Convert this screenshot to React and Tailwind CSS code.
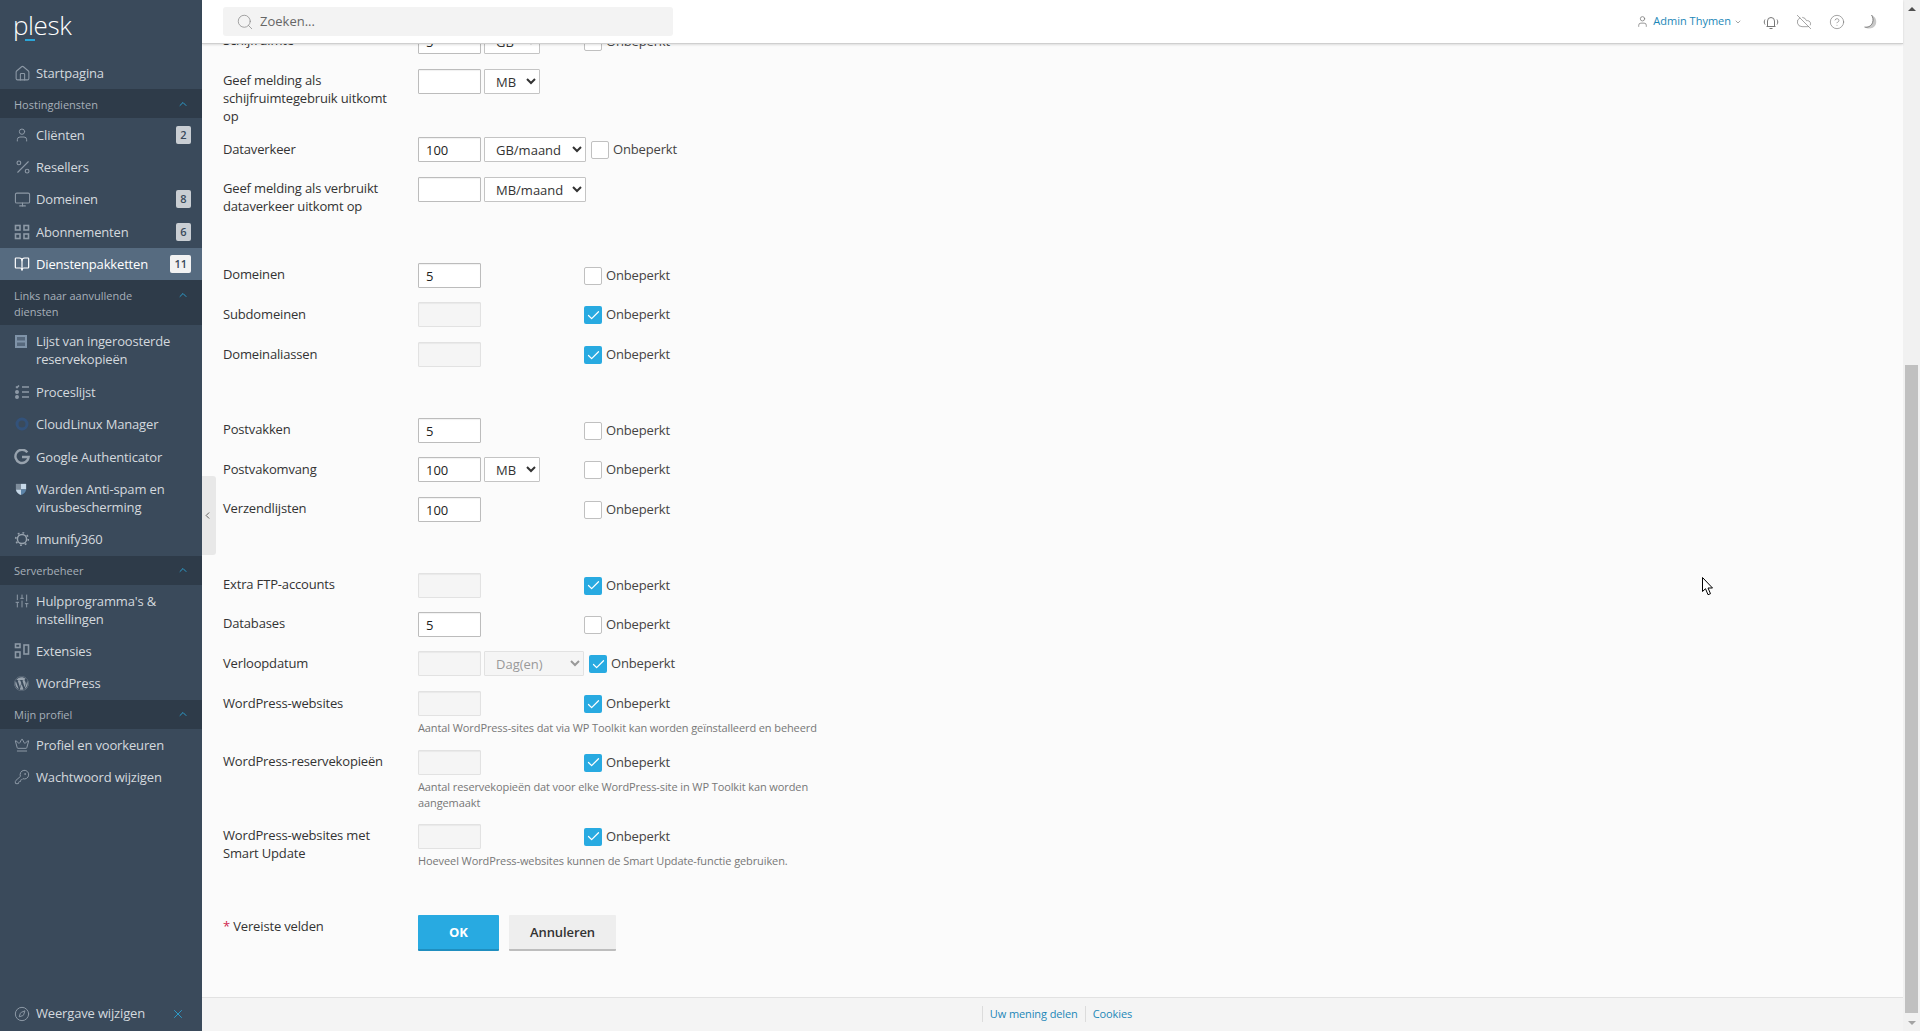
import React from 'react';
import { Home, User, Percent, Monitor, BookOpen, ChevronUp, ChevronDown, ChevronLeft, Crown, KeyRound, Compass, X, Search, CloudOff, CircleHelp, SlidersVertical, Check } from 'lucide-react';
import { FaWordpress } from 'react-icons/fa';

const GridIcon = () => (
  <svg width="16" height="16" viewBox="0 0 16 16" fill="none" stroke="#8d99a6" strokeWidth="1.6">
    <rect x="1.5" y="1.5" width="4.5" height="4.5" /><rect x="10" y="1.5" width="4.5" height="4.5" />
    <rect x="1.5" y="10" width="4.5" height="4.5" /><rect x="10" y="10" width="4.5" height="4.5" />
  </svg>
);

const ExtIcon = () => (
  <svg width="16" height="16" viewBox="0 0 16 16" fill="none" stroke="#8d99a6" strokeWidth="1.6">
    <rect x="1.5" y="1" width="4.5" height="3.5" /><rect x="1.5" y="9" width="4.5" height="5.5" /><rect x="10" y="2" width="4.5" height="9" />
  </svg>
);

const ListIcon = () => (
  <svg width="16" height="16" viewBox="0 0 16 16" fill="none" stroke="#8d99a6" strokeWidth="1.6">
    <path d="M2 2.500l1 1 2-2M8 3h7M8 8h7M8 13h7" />
    <circle cx="3" cy="8" r="1.2" fill="#8d99a6" /><circle cx="3" cy="13" r="1.2" fill="#8d99a6" />
  </svg>
);

const BackupIcon = () => (
  <svg width="12" height="13" viewBox="0 0 12 13" className="ml-[1px]">
    <rect x="0" y="0" width="12" height="13" fill="#7f93a8" />
    <rect x="2" y="2" width="8" height="3.500" fill="#56687c" />
    <rect x="2" y="7.500" width="8" height="3.500" fill="#56687c" />
  </svg>
);

const CloudLinuxIcon = () => (
  <svg width="16" height="16" viewBox="0 0 16 16" fill="none">
    <circle cx="8" cy="8" r="5" stroke="#33527a" strokeWidth="3" />
  </svg>
);

const GoogleIcon = () => (
  <svg width="16" height="16" viewBox="0 0 16 16" fill="none" stroke="#98a3ae" strokeWidth="2.4">
    <path d="M13.300 3.400A6.600 6.600 0 1 0 14.600 8H8" />
  </svg>
);

const ShieldIcon = () => (
  <svg width="12" height="14" viewBox="0 0 14 15" className="ml-[1px]">
    <path d="M1 1.500h6V8H1z" fill="#7e8d9c" /><path d="M7 1.500h6V8H7z" fill="#c6d8e8" />
    <path d="M1 8h6v6.500C4 13.500 1.500 11.500 1 8z" fill="#c6d8e8" /><path d="M7 8h6c-.5 3.500-3 5.500-6 6.500z" fill="#5d84a8" />
  </svg>
);

const GearIcon = () => (
  <svg width="16" height="16" viewBox="0 0 16 16" fill="none" stroke="#98a3ae">
    <circle cx="8" cy="8" r="4.600" strokeWidth="1.500" />
    <circle cx="8" cy="8" r="6.300" strokeWidth="1.600" strokeDasharray="1.800 3.100" />
  </svg>
);

const SirenIcon = () => (
  <svg width="16" height="16" viewBox="0 0 16 16" fill="none" stroke="#777" strokeWidth="1">
    <path d="M4.500 12V7a3.500 3.500 0 0 1 7 0v5M3.500 12.500h9M6.500 14.500h3" />
    <path d="M2 5.500C1 7 1 9 2 10.500M14 5.500c1 1.500 1 3.500 0 5" />
  </svg>
);

const MoonIcon = () => (
  <svg width="16" height="16" viewBox="0 0 16 16">
    <path d="M9.500 1C13.500 2.500 15.500 7 13.500 11 11.500 14.800 6 15.800 2.500 13 6.500 13.500 10 11.500 10.800 7.500 11.200 5 10.700 2.800 9.500 1z" fill="#c8c8c8" />
    <path d="M9.500 1c1.500 2 2 5 1.100 7.500C9.300 12 6 13.800 2.500 13" fill="none" stroke="#666" strokeWidth=".8" />
  </svg>
);

const ico = (Icon, size = 16) => <Icon size={size} color="#8d99a6" strokeWidth={1.5} />;

const NavItem = ({ icon, label, badge, active }) => (
  <div className={`flex items-start pl-[14px] pr-[11px] py-[7.2px] text-[13px] leading-[18px] tracking-[-0.16px] ${active ? 'bg-[#566b80] text-white' : 'text-[#d4d9de]'}`}>
    <span className="w-[22px] h-[18px] shrink-0 flex items-center">{icon}</span>
    <span className="flex-1 min-w-0">{label}</span>
    {badge && (
      <span className={`h-[18px] px-[4px] min-w-[15px] rounded-[2px] text-[11px] font-semibold leading-[18px] tracking-normal text-center text-[#3a4a5b] ${active ? 'bg-[#f2f2f2]' : 'bg-[#c9ced3]'}`}>{badge}</span>
    )}
  </div>
);

const NavSection = ({ label }) => (
  <div className="flex items-start bg-[#2e3b49] pl-[14px] pr-[13px] pt-[7.5px] pb-[5.5px] text-[11px] leading-[16px] text-[#a7b0b9]">
    <span className="flex-1">{label}</span>
    <ChevronUp size={12} color="#2ba6d8" strokeWidth={1.8} className="mt-[1px]" />
  </div>
);

const Sidebar = () => (
  <aside className="w-[202px] h-full shrink-0 flex flex-col bg-[#3a4a5b]">
    <div className="relative h-[57px] shrink-0">
      <span className="block pl-[13px] pt-[7px] text-[26px] leading-[36px] tracking-[-0.4px] font-light text-white">plesk</span>
      <span className="absolute left-[25px] top-[39px] w-[10px] h-[2px] bg-[#2ba6d8]"></span>
    </div>
    <NavItem icon={ico(Home, 17)} label="Startpagina" />
    <NavSection label="Hostingdiensten" />
    <NavItem icon={ico(User)} label="Cliënten" badge="2" />
    <NavItem icon={ico(Percent, 18)} label="Resellers" />
    <NavItem icon={ico(Monitor, 17)} label="Domeinen" badge="8" />
    <NavItem icon={<GridIcon />} label="Abonnementen" badge="6" />
    <NavItem icon={<BookOpen size={16} color="#fff" strokeWidth={1.8} />} label="Dienstenpakketten" badge="11" active />
    <NavSection label="Links naar aanvullende diensten" />
    <NavItem icon={<BackupIcon />} label="Lijst van ingeroosterde reservekopieën" />
    <NavItem icon={<ListIcon />} label="Proceslijst" />
    <NavItem icon={<CloudLinuxIcon />} label="CloudLinux Manager" />
    <NavItem icon={<GoogleIcon />} label="Google Authenticator" />
    <NavItem icon={<ShieldIcon />} label="Warden Anti-spam en virusbescherming" />
    <NavItem icon={<GearIcon />} label="Imunify360" />
    <NavSection label="Serverbeheer" />
    <NavItem icon={ico(SlidersVertical)} label="Hulpprogramma's & instellingen" />
    <NavItem icon={<ExtIcon />} label="Extensies" />
    <NavItem icon={<FaWordpress size={15} color="#98a3ae" />} label="WordPress" />
    <NavSection label="Mijn profiel" />
    <NavItem icon={ico(Crown)} label="Profiel en voorkeuren" />
    <NavItem icon={ico(KeyRound)} label="Wachtwoord wijzigen" />
    <div className="mt-auto flex items-center pl-[14px] pr-[17px] h-[34px] text-[13px] tracking-[-0.16px] text-[#d4d9de]">
      <span className="w-[22px] shrink-0 flex items-center">{ico(Compass)}</span>
      <span className="flex-1">Weergave wijzigen</span>
      <X size={14} color="#2ba6d8" strokeWidth={1.5} />
    </div>
  </aside>
);

const Header = () => (
  <header className="relative z-10 h-[44px] shrink-0 flex items-center bg-white border-b border-[#cfcfcf] shadow-[0_1px_2px_rgba(0,0,0,0.12)] pl-[21px] pr-[25px]">
    <div className="w-[450px] h-[29px] flex items-center bg-[#f3f3f3] rounded-[3px] pl-[13px] text-[13px] text-[#666]">
      <Search size={18} color="#888" strokeWidth={1} className="mr-[6px]" />
      Zoeken...
    </div>
    <div className="ml-auto flex items-center">
      <User size={13} color="#777" strokeWidth={1.4} className="mr-[4px]" />
      <span className="text-[11px] font-medium text-[#1b87b8]">Admin Thymen</span>
      <ChevronDown size={8} color="#777" strokeWidth={2} className="ml-[3px] mr-[21px]" />
      <div className="flex items-center gap-[17px]">
        <SirenIcon />
        <CloudOff size={16} color="#777" strokeWidth={1} />
        <CircleHelp size={16} color="#777" strokeWidth={1} />
        <MoonIcon />
      </div>
    </div>
  </header>
);

const Input = ({ value, disabled }) => (
  <input
    readOnly
    disabled={disabled}
    value={value || ''}
    className={`w-[63px] h-[25px] border rounded-[1px] px-[7px] text-[13px] text-[#222] ${disabled ? 'bg-[#f5f5f5] border-[#e2e2e2] shadow-[inset_0_1px_1px_rgba(0,0,0,0.05)]' : 'bg-white border-[#bcbcbc] shadow-[inset_0_1px_1px_rgba(0,0,0,0.06)]'}`}
  />
);

const Unit = ({ value, className, disabled }) => (
  <select
    disabled={disabled}
    defaultValue={value}
    className={`ml-[3px] h-[25px] border rounded-[1px] pl-[7px] text-[13px] ${disabled ? 'bg-[#f5f5f5] border-[#e2e2e2] text-[#999]' : 'bg-white border-[#c4c4c4] text-[#333]'} ${className}`}
  >
    <option>{value}</option>
  </select>
);

const Limit = ({ checked, flush, className }) => (
  <label className={`flex items-center gap-[4px] text-[13px] tracking-[-0.16px] text-[#444] ${flush ? '' : 'mt-[1px]'} ${className || ''}`}>
    <span className={`w-[18px] h-[18px] rounded-[2px] flex items-center justify-center ${checked ? 'bg-[#28aae1]' : 'bg-white border border-[#c0c0c0]'}`}>
      {checked && <Check size={15} color="#fff" strokeWidth={2} />}
    </span>
    Onbeperkt
  </label>
);

const Row = ({ label, className, labelClass, children, hint }) => (
  <div className={`flex ${className}`}>
    <div className={`w-[195px] shrink-0 pr-[20px] text-[13px] leading-[18px] tracking-[-0.16px] text-[#333] ${labelClass || 'pt-[2px]'}`}>{label}</div>
    <div>
      <div className="flex items-center h-[25px]">{children}</div>
      {hint && <p className="w-[410px] mt-[4px] text-[11px] leading-[16px] tracking-[-0.1px] text-[#777]">{hint}</p>}
    </div>
  </div>
);

// the number box column is 166px wide, the checkbox sits right of it
const Slot = ({ children }) => <div className="flex items-center w-[166px]">{children}</div>;

const Form = () => (
  <div className="pl-[21px] mt-[-15px]">
    <Row label="Schijfruimte" labelClass="pt-[2px]" className="h-[40px]"><Slot><Input value="5" /><Unit value="GB" className="w-[56px]" /></Slot><Limit /></Row>
    <Row label="Geef melding als schijfruimtegebruik uitkomt op" className="h-[68px]"><Slot><Input /><Unit value="MB" className="w-[56px]" /></Slot></Row>
    <Row label="Dataverkeer" labelClass="pt-[3px]" className="h-[40px]"><Input value="100" /><Unit value="GB/maand" className="w-[102px]" /><Limit className="ml-[5px]" /></Row>
    <Row label="Geef melding als verbruikt dataverkeer uitkomt op" className="h-[86px]"><Input /><Unit value="MB/maand" className="w-[102px]" /></Row>

    <Row label="Domeinen" className="h-[39px]"><Slot><Input value="5" /></Slot><Limit /></Row>
    <Row label="Subdomeinen" labelClass="pt-[3px]" className="h-[40px]"><Slot><Input disabled /></Slot><Limit checked /></Row>
    <Row label="Domeinaliassen" labelClass="pt-[3px]" className="h-[76px]"><Slot><Input disabled /></Slot><Limit checked /></Row>

    <Row label="Postvakken" className="h-[39px]"><Slot><Input value="5" /></Slot><Limit flush /></Row>
    <Row label="Postvakomvang" labelClass="pt-[3px]" className="h-[40px]"><Slot><Input value="100" /><Unit value="MB" className="w-[56px]" /></Slot><Limit /></Row>
    <Row label="Verzendlijsten" className="h-[76px]"><Slot><Input value="100" /></Slot><Limit /></Row>

    <Row label="Extra FTP-accounts" className="h-[39px]"><Slot><Input disabled /></Slot><Limit checked flush /></Row>
    <Row label="Databases" className="h-[39px]"><Slot><Input value="5" /></Slot><Limit /></Row>
    <Row label="Verloopdatum" labelClass="pt-[3px]" className="h-[40px]"><Input disabled /><Unit value="Dag(en)" className="w-[100px]" disabled /><Limit className="ml-[5px]" checked /></Row>
    <Row label="WordPress-websites" labelClass="pt-[3px]" className="h-[59px]" hint="Aantal WordPress-sites dat via WP Toolkit kan worden geïnstalleerd en beheerd"><Slot><Input disabled /></Slot><Limit checked /></Row>
    <Row label="WordPress-reservekopieën" labelClass="pt-[2px]" className="h-[74px]" hint="Aantal reservekopieën dat voor elke WordPress-site in WP Toolkit kan worden aangemaakt"><Slot><Input disabled /></Slot><Limit checked flush /></Row>
    <Row label="WordPress-websites met Smart Update" className="h-[91px]" hint="Hoeveel WordPress-websites kunnen de Smart Update-functie gebruiken."><Slot><Input disabled /></Slot><Limit checked flush /></Row>

    <div className="flex">
      <div className="w-[195px] shrink-0 pt-[2px] text-[13px] leading-[18px] tracking-[-0.16px] text-[#333]"><span className="text-[#d0264f]">*</span> Vereiste velden</div>
      <button className="w-[81px] h-[36px] pt-[1px] bg-[#28aae1] border-b-2 border-[#1f8ebf] rounded-[1px] text-[13px] font-bold text-white">OK</button>
      <button className="ml-[10px] w-[107px] h-[36px] pt-[2px] bg-[#eeeeee] border-b-2 border-[#bdbdbd] rounded-[1px] text-[13px] font-semibold tracking-[-0.1px] text-[#333]">Annuleren</button>
    </div>
  </div>
);

const Footer = () => (
  <footer className="h-[34px] shrink-0 flex items-center justify-center pl-[16px] pb-[2px] bg-[#f4f4f4] border-t border-[#e2e2e2] text-[11px] tracking-[-0.1px] text-[#1b87b8]">
    <span className="border-l border-[#dcdcdc] px-[7px] leading-[16px]">Uw mening delen</span>
    <span className="border-l border-[#dcdcdc] px-[7px] leading-[16px]">Cookies</span>
  </footer>
);

const Scrollbar = () => (
  <div className="w-[17px] h-full shrink-0 flex flex-col items-center bg-[#f1f1f1]">
    <div className="h-[17px] flex items-center justify-center">
      <span className="w-0 h-0 border-x-[4px] border-x-transparent border-b-[4px] border-b-[#505050]"></span>
    </div>
    <div className="w-[13px] mt-[348px] h-[648px] bg-[#c0c0c0]"></div>
    <div className="mt-auto h-[17px] flex items-center justify-center">
      <span className="w-0 h-0 border-x-[4px] border-x-transparent border-t-[4px] border-t-[#a3a3a3]"></span>
    </div>
  </div>
);

const App = () => (
  <div className="relative flex h-[1031px] overflow-hidden bg-[#fbfbfb] font-['Open_Sans',sans-serif]">
    <Sidebar />
    <main className="flex-1 min-w-0 h-full flex flex-col">
      <Header />
      <div className="flex-1 min-h-0 overflow-hidden"><Form /></div>
      <Footer />
    </main>
    <Scrollbar />
    <button className="absolute left-[202px] top-[476px] w-[14px] h-[79px] pr-[3px] flex items-center justify-center bg-[#e8e8e8] rounded-r-[3px]">
      <ChevronLeft size={11} color="#444" strokeWidth={1.8} />
    </button>
    <svg className="absolute left-[1702px] top-[577px]" width="12" height="20" viewBox="0 0 12 20">
      <path d="M.5.5v14l3-2.800 2.500 6 2.500-1-2.500-5.700h4.500z" fill="#fff" stroke="#000" strokeWidth="1" />
    </svg>
  </div>
);

export default App;
